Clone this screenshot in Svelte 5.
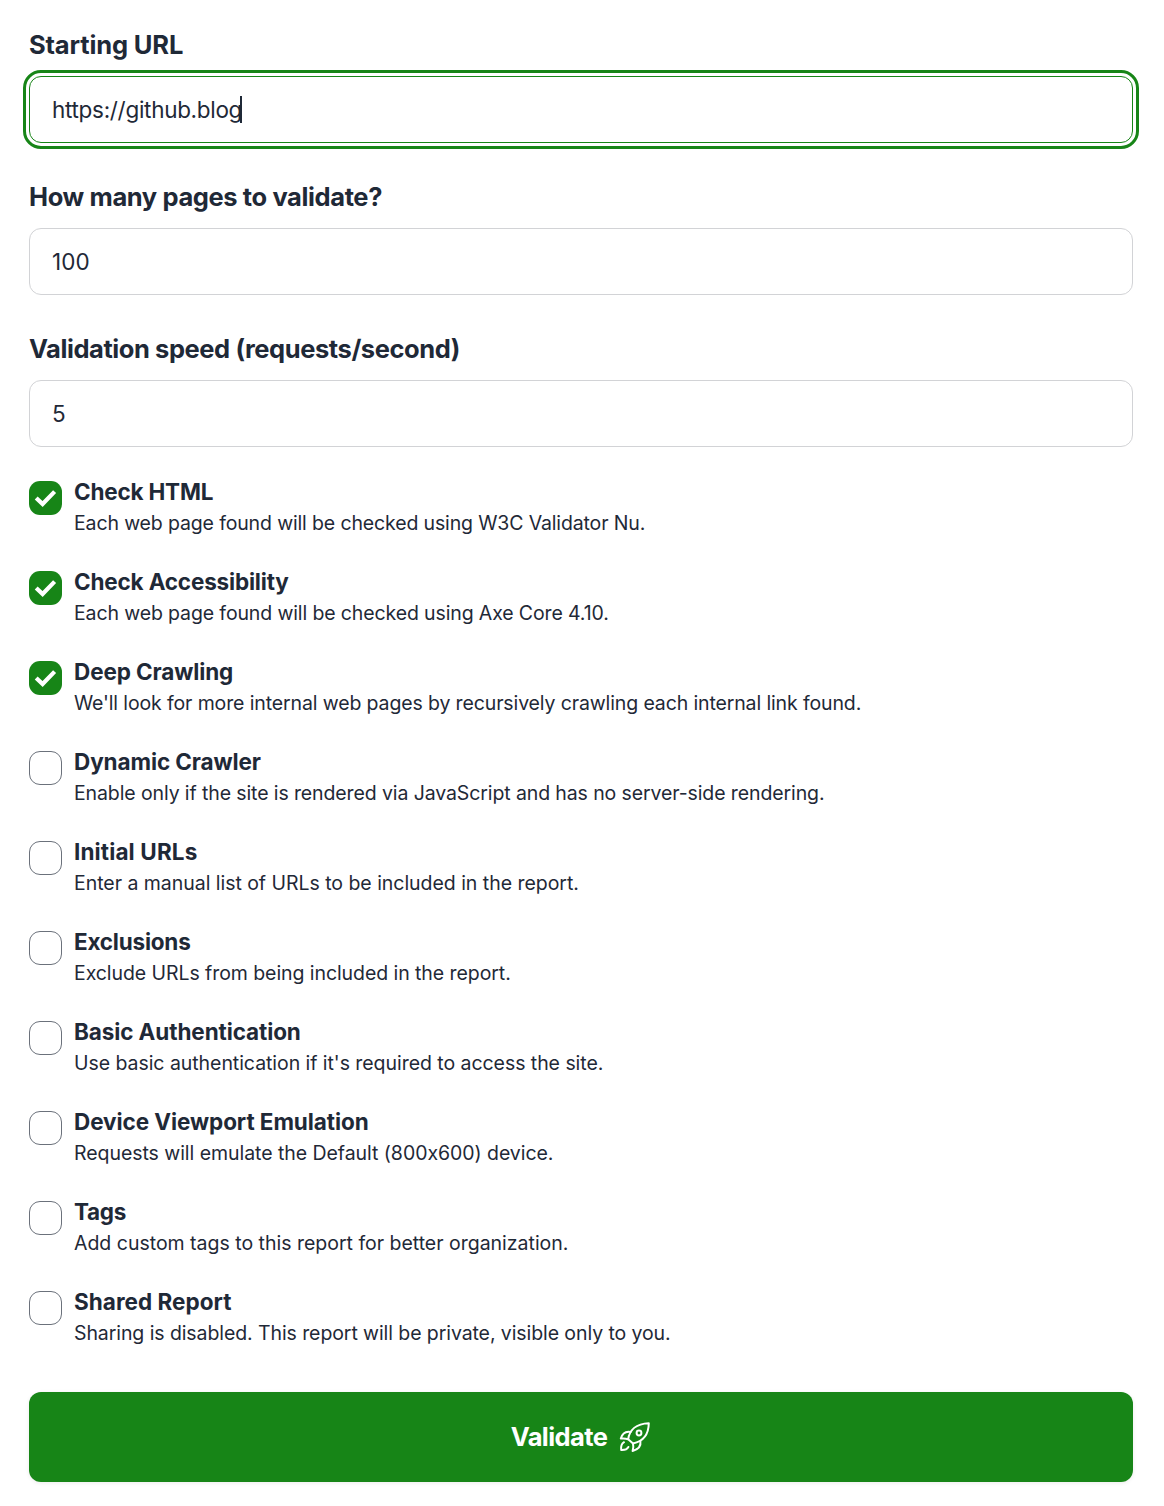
<script>
  // `track` values are letter spacings in pixels
  const fields = [
    { label: 'Starting URL', track: -0.15, value: 'https://github.blog', focused: true },
    { label: 'How many pages to validate?', track: -0.39, value: '100' },
    { label: 'Validation speed (requests/second)', track: -0.43, value: '5' },
  ];
  const options = $state([
    { title: 'Check HTML', titleTrack: -0.2, text: 'Each web page found will be checked using W3C Validator Nu.', on: true, track: -0.14 },
    { title: 'Check Accessibility', titleTrack: -0.17, text: 'Each web page found will be checked using Axe Core 4.10.', on: true, track: -0.125 },
    { title: 'Deep Crawling', titleTrack: -0.12, text: "We'll look for more internal web pages by recursively crawling each internal link found.", on: true, track: -0.126 },
    { title: 'Dynamic Crawler', titleTrack: -0.1, text: 'Enable only if the site is rendered via JavaScript and has no server-side rendering.', on: false, track: -0.11 },
    { title: 'Initial URLs', titleTrack: 0.13, text: 'Enter a manual list of URLs to be included in the report.', on: false, track: -0.035 },
    { title: 'Exclusions', titleTrack: -0.22, text: 'Exclude URLs from being included in the report.', on: false, track: -0.07 },
    { title: 'Basic Authentication', titleTrack: -0.1, text: "Use basic authentication if it's required to access the site.", on: false, track: -0.05 },
    { title: 'Device Viewport Emulation', titleTrack: -0.08, text: 'Requests will emulate the Default (800x600) device.', on: false, track: -0.05 },
    { title: 'Tags', titleTrack: -0.3, text: 'Add custom tags to this report for better organization.', on: false, track: -0.01 },
    { title: 'Shared Report', titleTrack: 0.03, text: 'Sharing is disabled. This report will be private, visible only to you.', on: false, track: -0.086 },
  ]);
</script>

<form class="form">
  {#each fields as field}
    <div class="field">
      <div class="label" style:letter-spacing="{field.track}px"><span>{field.label}</span></div>
      <div class="input" class:focused={field.focused}>
        <span class="value">{field.value}</span>{#if field.focused}<i class="caret"></i>{/if}
      </div>
    </div>
  {/each}

  <div class="options">
    {#each options as option}
      <div class="option">
        <button
          type="button"
          class="box"
          class:on={option.on}
          role="checkbox"
          aria-checked={option.on}
          aria-label={option.title}
          onclick={() => (option.on = !option.on)}
        >
          {#if option.on}
            <svg width="33" height="34" viewBox="0 0 33 34" fill="none" stroke="#fff" stroke-width="4.2">
              <path d="M7.2 16.9 L13.6 23 L25.6 10.6" />
            </svg>
          {/if}
        </button>
        <div class="copy">
          <div class="title" style:letter-spacing="{option.titleTrack}px"><span>{option.title}</span></div>
          <div class="desc" style:letter-spacing="{option.track}px"><span>{option.text}</span></div>
        </div>
      </div>
    {/each}
  </div>

  <button type="button" class="submit">
    <span>Validate</span>
    <svg class="rocket" width="32" height="32" viewBox="0 0 32 32" fill="none" stroke="#fff" stroke-width="2" stroke-linejoin="round" stroke-linecap="round">
      <path d="M9.2 18.2 C10.4 9.2 17 2.6 29.8 2.2 C29.6 13 25 20.2 14 22.4 Z" />
      <path d="M11.8 10.9 C6.6 9.9 3.2 12.6 1.8 17.6 C4.4 17.2 6.8 17.4 9.2 18.2" />
      <path d="M21.4 20.2 C22.2 25.4 19 28.6 13.6 30 C14.4 27.4 14.6 25 14 22.4" />
      <path d="M5 21.2 C2.5 22.7 1.8 25.6 2.2 29 C5.6 29.2 8.2 28.2 9.4 26" />
      <circle cx="20" cy="12" r="2.4" />
    </svg>
  </button>
</form>

<style>
  :global(body) {
    background: #fff;
  }
  .form {
    box-sizing: border-box;
    width: 1164px;
    height: 1506px;
    padding: 24px 31px 0 29px;
    font-family: Inter, 'Liberation Sans', sans-serif;
    font-feature-settings: 'calt' 0;
    color: #1f2937;
    overflow: hidden;
  }
  .field {
    height: 152px;
  }
  .label {
    height: 52px;
    line-height: 42px;
    font-size: 25.5px;
    font-weight: 700;
    white-space: nowrap;
  }
  .input {
    box-sizing: border-box;
    display: flex;
    align-items: center;
    height: 67px;
    padding: 0 22px;
    border: 1px solid #d2d3d6;
    border-radius: 12px;
    font-size: 22.5px;
  }
  .input.focused {
    border-color: #178517;
    outline: 3px solid #178517;
    outline-offset: 3px;
  }
  .value {
    letter-spacing: 0.1px;
  }
  .focused .value {
    letter-spacing: -0.3px;
  }
  .caret {
    width: 2px;
    height: 27px;
    margin-left: -2px;
    background: #1f2937;
  }
  .options {
    padding-top: 1px;
  }
  .option {
    display: flex;
    gap: 12px;
    height: 90px;
  }
  .box {
    box-sizing: border-box;
    width: 33px;
    height: 34px;
    padding: 0;
    border: 1px solid #6b717b;
    border-radius: 11px;
    background: #fff;
    flex: none;
  }
  .box.on {
    border: 0;
    background: #178517;
  }
  .box svg,
  .rocket {
    display: block;
  }
  .copy {
    margin-top: -5px;
    white-space: nowrap;
  }
  .title {
    height: 32px;
    line-height: 32px;
    font-size: 22.5px;
    font-weight: 700;
  }
  .desc {
    height: 30px;
    line-height: 30px;
    font-size: 19.5px;
  }
  .submit {
    display: flex;
    align-items: center;
    justify-content: center;
    gap: 12px;
    width: 100%;
    height: 90px;
    margin-top: 11px;
    padding: 0;
    border: 0;
    border-radius: 12px;
    background: #178517;
    box-shadow: 0 1px 4px rgba(0, 0, 0, 0.08);
    color: #fff;
    font: 700 25.5px/40px Inter, 'Liberation Sans', sans-serif;
    letter-spacing: -0.6px;
  }
</style>
